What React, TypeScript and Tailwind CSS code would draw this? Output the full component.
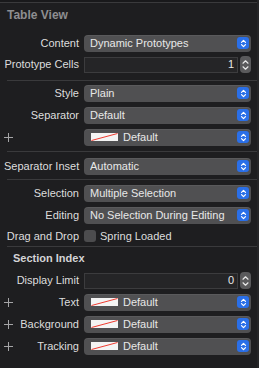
import React from 'react';

const font = { fontFamily: '"Liberation Sans", Arial, sans-serif' };

const Chevrons: React.FC = () => (
  <svg width="7" height="9" viewBox="0 0 7 9" fill="none" stroke="white" strokeWidth="1.2" strokeLinecap="round" strokeLinejoin="round">
    <path d="M1.5 3.3 L3.5 1.3 L5.5 3.3" />
    <path d="M1.5 5.7 L3.5 7.7 L5.5 5.7" />
  </svg>
);

const Swatch: React.FC = () => (
  <svg width="27" height="8" viewBox="0 0 27 8" className="shrink-0">
    <rect x="0" y="0" width="27" height="8" fill="#f4f4f4" />
    <line x1="0.5" y1="7.5" x2="26.5" y2="0.5" stroke="#ee3b30" strokeWidth="1" />
  </svg>
);

const Plus: React.FC = () => (
  <svg width="9" height="9" viewBox="0 0 9 9" stroke="#a5a5a7" strokeWidth="1">
    <line x1="4.5" y1="0" x2="4.5" y2="9" />
    <line x1="0" y1="4.5" x2="9" y2="4.5" />
  </svg>
);

const Popup: React.FC<{ text: string; swatch?: boolean }> = ({ text, swatch }) => (
  <div className="w-[167px] h-[17px] rounded-[4px] bg-[#505052] flex items-center pl-[6px] pr-[2px] shadow-[inset_0_1px_0_rgba(255,255,255,0.06)]">
    {swatch && (
      <div className="pl-px mr-[5px] flex">
        <Swatch />
      </div>
    )}
    <span className="flex-1 text-[11px] text-[#e8e8e8] truncate leading-none">{text}</span>
    <div className="w-[12px] h-[12px] rounded-[3px] bg-[#2a6fe8] flex items-center justify-center">
      <Chevrons />
    </div>
  </div>
);

const Stepper: React.FC = () => (
  <div className="w-[11px] h-[17px] rounded-[4px] bg-[#5a5a5c] flex flex-col items-center justify-center gap-[2px]">
    <svg width="7" height="4" viewBox="0 0 7 4" fill="none" stroke="#e8e8e8" strokeWidth="1.2" strokeLinecap="round" strokeLinejoin="round">
      <path d="M1 3.2 L3.5 0.8 L6 3.2" />
    </svg>
    <svg width="7" height="4" viewBox="0 0 7 4" fill="none" stroke="#e8e8e8" strokeWidth="1.2" strokeLinecap="round" strokeLinejoin="round">
      <path d="M1 0.8 L3.5 3.2 L6 0.8" />
    </svg>
  </div>
);

const Field: React.FC<{ value: string }> = ({ value }) => (
  <div className="w-[167px] flex items-center gap-[2px]">
    <div className="w-[155px] h-[16px] bg-[#252527] border border-[#3c3c3e] flex items-center justify-end pr-[3px]">
      <span className="text-[11px] text-[#e8e8e8] leading-none">{value}</span>
    </div>
    <Stepper />
  </div>
);

const Row: React.FC<{ label?: string; plus?: boolean; h?: string; children: React.ReactNode }> = ({ label, plus, h = 'h-[22px]', children }) => (
  <div className={`flex items-center ${h}`}>
    <div className="w-[79px] flex items-center justify-between pl-[4px]">
      <span className="flex">{plus && <Plus />}</span>
      <span className="text-[11px] text-[#dddddd] whitespace-nowrap leading-none">{label}</span>
    </div>
    <div className="ml-[5px]">{children}</div>
  </div>
);

const Line: React.FC = () => <div className="ml-[7px] h-px bg-[#3a3a3c]" />;

export default function App() {
  return (
    <div className="w-[259px] h-[368px] bg-[#1e1e20] overflow-hidden border-r-2 border-[#252527]" style={font}>
      <div className="h-[2px] bg-[#19191b]" />
      <div className="h-px bg-[#3a3a3c]" />
      <div className="h-[23px] flex items-center pl-[7px]">
        <span className="text-[12px] font-bold text-[#8e8e90] leading-none">Table View</span>
      </div>
      <div className="h-[6px]" />
      <Row label="Content">
        <Popup text="Dynamic Prototypes" />
      </Row>
      <Row label="Prototype Cells" h="h-[21px]">
        <Field value="1" />
      </Row>
      <div className="h-[5px]" />
      <Line />
      <div className="h-px" />
      <Row label="Style">
        <Popup text="Plain" />
      </Row>
      <Row label="Separator">
        <Popup text="Default" />
      </Row>
      <Row plus>
        <Popup text="Default" swatch />
      </Row>
      <div className="h-[3px]" />
      <Line />
      <div className="h-[3px]" />
      <Row label="Separator Inset">
        <Popup text="Automatic" />
      </Row>
      <div className="h-[2px]" />
      <Line />
      <div className="h-[2px]" />
      <Row label="Selection">
        <Popup text="Multiple Selection" />
      </Row>
      <Row label="Editing">
        <Popup text="No Selection During Editing" />
      </Row>
      <Row label="Drag and Drop" h="h-[20px]">
        <div className="flex items-center gap-[4px]">
          <div className="w-[12px] h-[12px] rounded-[3px] bg-[#4c4c4e]" />
          <span className="text-[11px] text-[#dddddd] leading-none">Spring Loaded</span>
        </div>
      </Row>
      <Line />
      <div className="h-[23px] flex items-center pl-[13px]">
        <span className="text-[11px] font-bold text-[#d4d4d6] leading-none">Section Index</span>
      </div>
      <Row label="Display Limit" h="h-[21px]">
        <Field value="0" />
      </Row>
      <Row label="Text" plus>
        <Popup text="Default" swatch />
      </Row>
      <Row label="Background" plus>
        <Popup text="Default" swatch />
      </Row>
      <Row label="Tracking" plus>
        <Popup text="Default" swatch />
      </Row>
    </div>
  );
}
